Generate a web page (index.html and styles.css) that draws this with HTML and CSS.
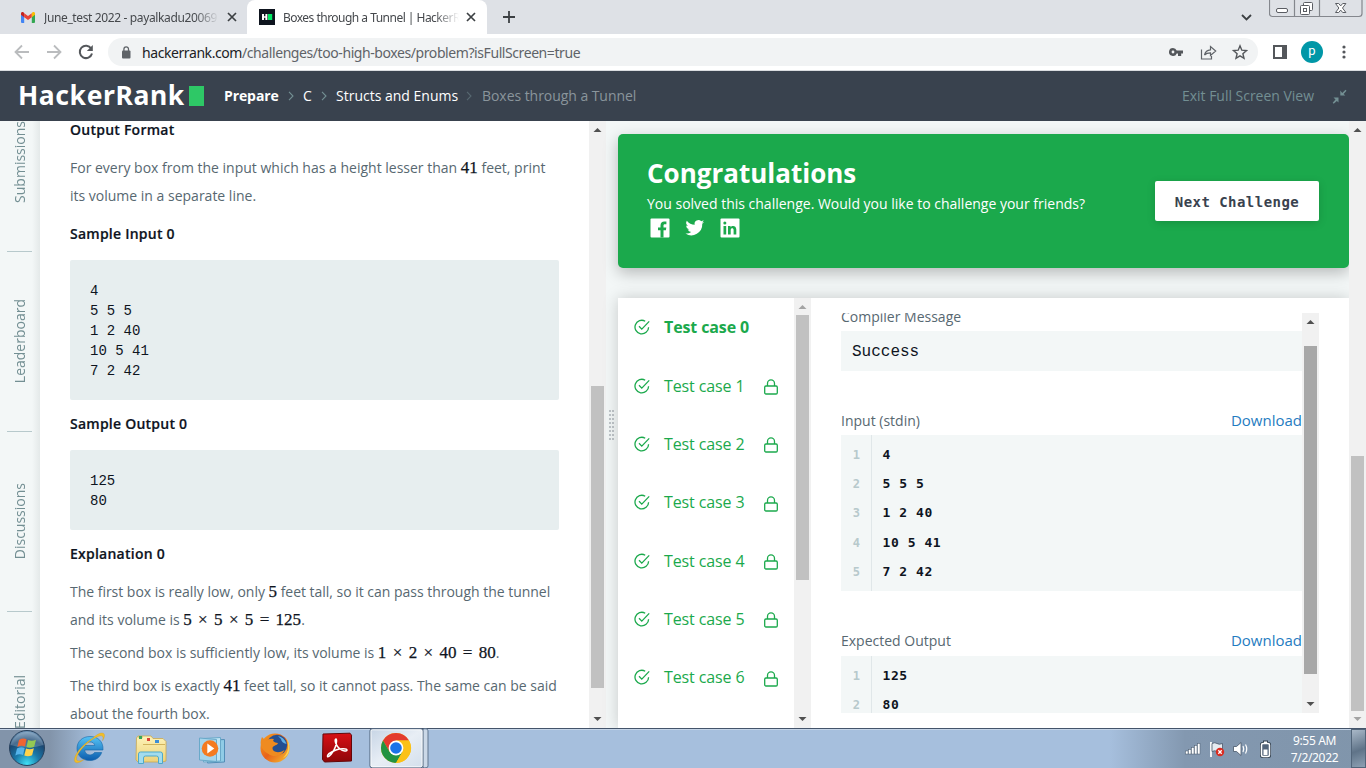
FILE: index.html
```html
<!DOCTYPE html>
<html lang="en">
<head>
<meta charset="utf-8">
<title>Boxes through a Tunnel | HackerRank</title>
<link rel="stylesheet" href="styles.css">
</head>
<body>
<svg width="0" height="0" class="defs">
  <symbol id="close" viewBox="0 0 10 10"><path d="M1 1l8 8M9 1L1 9" stroke="#3c4043" stroke-width="1.7" fill="none"/></symbol>
  <symbol id="check" viewBox="0 0 16 16"><path d="M11.2 2.2A6.8 6.8 0 1 0 14.6 8.2M5 7.2l2.8 2.9L15.2 2.4" stroke="#1ba94c" stroke-width="1.3" fill="none"/></symbol>
  <symbol id="lock" viewBox="0 0 14 16"><rect x=".7" y="7" width="12.6" height="8" rx="1.2" fill="none" stroke="#1ba94c" stroke-width="1.3"/><path d="M3.5 7V4.4a3.5 3.5 0 0 1 7 0V7" fill="none" stroke="#1ba94c" stroke-width="1.3"/></symbol>
  <symbol id="chev" viewBox="0 0 6 10"><path d="M1 .8l4 4.2-4 4.2" fill="none" stroke="currentColor" stroke-width="1.1"/></symbol>
</svg>

<div class="tabs">
  <div class="tab">
    <svg width="14" height="11" viewBox="0 0 14 11"><path d="M0 1.5V10a1 1 0 0 0 1 1h2.2V4.5z" fill="#4285f4"/><path d="M14 1.5V10a1 1 0 0 1-1 1h-2.2V4.5z" fill="#34a853"/><path d="M3.2 1.2L7 4.1l3.8-2.9v4L7 8.1 3.2 5.2z" fill="#ea4335"/><path d="M0 1.6C0 0 1.7-.3 2.6.5l.6.6v4.1L0 2.8z" fill="#c5221f"/><path d="M14 1.6C14 0 12.300-.3 11.400.5l-.6.6v4.100L14 2.800z" fill="#fbbc04"/></svg>
    <span class="tab-title mail">June_test 2022 - payalkadu20069</span>
    <svg width="10" height="10"><use href="#close"/></svg>
  </div>
  <div class="tab active">
    <svg width="16" height="16"><rect width="16" height="16" fill="#0e141e"/><path d="M3 5h2v2.200h1.400V5h2v6h-2V8.800H5V11H3z" fill="#fff"/><rect x="9" y="5" width="4.200" height="6" fill="#00ea64"/></svg>
    <span class="tab-title hr">Boxes through a Tunnel | HackerR</span>
    <svg width="10" height="10"><use href="#close"/></svg>
  </div>
  <svg class="plus" width="12" height="12"><path d="M6 0v12M0 6h12" stroke="#3c4043" stroke-width="1.800"/></svg>
  <svg class="drop" width="11" height="7"><path d="M1 1l4.500 4.500L10 1" fill="none" stroke="#3c4043" stroke-width="1.800"/></svg>
  <svg class="winbtns" width="94" height="18"><path d="M.5 0v13.500a3 3 0 0 0 3 3h86.500a3 3 0 0 0 3-3V0M25.500 0v16M50.500 0v16" fill="none" stroke="#84878d" stroke-width="1.200"/><g fill="#fff" stroke="#5a5d63"><rect x="7.500" y="8.500" width="11" height="4" rx="1.500"/><rect x="34.500" y="2.500" width="9" height="8" rx="1"/><rect x="31.500" y="5.500" width="9" height="9" rx="1"/><rect x="34.500" y="8.500" width="3" height="3"/><path d="M66.500 3.500h3.200l2 2.400 2-2.400h3.200l-3.400 4.500 3.400 4.500h-3.200l-2-2.400-2 2.400h-3.200L69.900 8z"/></g></svg>
</div>

<div class="toolbar">
  <svg width="108" height="36" viewBox="0 0 108 36" fill="none"><g stroke="#babcbe" stroke-width="1.800"><path d="M29 18H16M22 11.500L15.500 18l6.500 6.500M47 18h13M54 11.500l6.500 6.500-6.500 6.500"/></g><path d="M91.200 14.500A6.200 6.200 0 1 0 92 19.500" stroke="#54575b" stroke-width="2"/><path d="M92.800 11v6h-6z" fill="#54575b"/></svg>
  <div class="omnibox">
    <svg width="10" height="13" viewBox="0 0 10 13"><rect x="1" y="4.500" width="8.500" height="8" rx="1" fill="#5f6368"/><path d="M2.900 5V3.200a2.300 2.300 0 0 1 4.600 0V5" fill="none" stroke="#5f6368" stroke-width="1.300"/></svg>
    <span class="url"><b>hackerrank.com</b>/challenges/too-high-boxes/problem?isFullScreen=true</span>
    <svg width="80" height="18" viewBox="0 0 80 18"><path d="M5 5a4 4 0 1 0 3.700 5.500H10V13h3.200v-2.500H15V7.500H8.700A4 4 0 0 0 5 5zm0 2.600a1.400 1.400 0 1 1 0 2.800 1.400 1.400 0 0 1 0-2.800z" fill="#54575b"/><path d="M33.500 6.500v9.500h10v-3M36.500 12c.8-3.500 3-5 6-5.200V3.500L47.700 8l-5.200 4.500V9.800c-2.500 0-4.500.5-6 2.200z" fill="none" stroke="#5f6368" stroke-width="1.200"/><path d="M72 2.800l1.800 4.400 4.700.4-3.600 3.100 1.100 4.600-4-2.500-4 2.500 1.100-4.600-3.600-3.100 4.700-.4z" fill="none" stroke="#54575b" stroke-width="1.400"/></svg>
  </div>
  <svg width="14" height="14"><path d="M1 1h12v12H1z" fill="none" stroke="#54575b" stroke-width="2"/><path d="M9 0h5v14H9z" fill="#54575b"/></svg>
  <span class="avatar">p</span>
  <svg width="4" height="14" fill="#54575b"><circle cx="2" cy="2" r="1.600"/><circle cx="2" cy="7" r="1.600"/><circle cx="2" cy="12" r="1.600"/></svg>
</div>

<header class="header">
  <span class="logo">HackerRank</span><span class="logo-block"></span>
  <b class="c-prepare">Prepare</b><svg class="chev" width="6" height="10"><use href="#chev"/></svg>
  <span class="c-c">C</span><svg class="chev" width="6" height="10"><use href="#chev"/></svg>
  <span class="c-structs">Structs and Enums</span><svg class="chev dim" width="6" height="10"><use href="#chev"/></svg>
  <span class="c-last">Boxes through a Tunnel</span>
  <span class="exit">Exit Full Screen View</span>
  <svg width="15" height="15" viewBox="0 0 15 15" fill="#738f93"><path d="M8.300 1.500v5h5L11.600 5 14.500 1.800l-1-1L10.200 4zM1.500 8.500h5v5L4.900 12l-3.200 2.700-1-1L3.500 10.500z"/></svg>
</header>

<main class="main">
  <nav class="side">
    <div><span>Submissions</span></div><div><span>Leaderboard</span></div><div><span>Discussions</span></div><div><span>Editorial</span></div>
  </nav>
  <section class="problem">
    <h4>Output Format</h4>
    <p><span class="l1">For every box from the input which has a height lesser than <i>41</i> feet, print</span><br><span>its volume in a separate line.</span></p>
    <h4>Sample Input 0</h4>
    <pre>4
5 5 5
1 2 40
10 5 41
7 2 42</pre>
    <h4>Sample Output 0</h4>
    <pre>125
80</pre>
    <h4>Explanation 0</h4>
    <p><span class="narrow">The first box is really low, only <i>5</i> feet tall, so it can pass through the tunnel</span><br><span>and its volume is <i>5 × 5 × 5 = 125</i>.</span></p>
    <p class="tight"><span class="narrow">The second box is sufficiently low, its volume is <i>1 × 2 × 40 = 80</i>.</span></p>
    <p class="tight">The third box is exactly <i>41</i> feet tall, so it cannot pass. The same can be said<br>about the fourth box.</p>
  </section>
  <div class="sb sb-problem"><b class="up"></b><div class="thumb"></div><b class="down"></b></div>
  <div class="splitter"><div class="grip"></div></div>
  <section class="result">
    <div class="banner">
      <div class="msg">
        <h2>Congratulations</h2>
        <p>You solved this challenge. Would you like to challenge your friends?</p>
        <svg width="92" height="20" viewBox="0 0 92 20"><rect x=".5" y=".5" width="19" height="19" rx="1" fill="#fff"/><path d="M10.500 19.500v-7.300H8V9.500h2.500V7.400c0-2.500 1.500-3.800 3.700-3.800h2.200v2.600h-1.500c-1.200 0-1.400.6-1.400 1.400v1.900h2.800l-.4 2.700h-2.400v7.300z" fill="#1ba94c"/><path transform="translate(35.500 1.500) scale(.78)" d="M23.900 3a9.500 9.500 0 0 1-2.800.8A4.900 4.900 0 0 0 23.300 1.100a10 10 0 0 1-3.100 1.200 4.900 4.900 0 0 0-8.400 4.500A14 14 0 0 1 1.700 1.600a4.900 4.900 0 0 0 1.500 6.600 4.900 4.900 0 0 1-2.200-.6 4.900 4.900 0 0 0 3.900 4.900 4.900 4.900 0 0 1-2.200.1 4.900 4.900 0 0 0 4.600 3.400A9.900 9.900 0 0 1 0 18a14 14 0 0 0 21.500-12.400A10 10 0 0 0 23.900 3z" fill="#fff"/><rect x="70.500" y=".5" width="19" height="19" rx="1" fill="#fff"/><path d="M73.500 8h2.700v8.500h-2.700zM78 8h2.600v1.200c.9-1.700 5.700-2.200 5.700 2.300v5h-2.700v-4.400c0-2.400-2.900-2.200-2.900 0v4.400H78z" fill="#1ba94c"/><circle cx="74.850" cy="5" r="1.550" fill="#1ba94c"/></svg>
      </div>
      <button>Next Challenge</button>
    </div>
    <div class="cases">
      <ul>
        <li class="on"><svg width="16" height="16"><use href="#check"/></svg><span>Test case 0</span></li>
        <li><svg width="16" height="16"><use href="#check"/></svg><span>Test case 1</span><svg class="lk" width="14" height="16"><use href="#lock"/></svg></li>
        <li><svg width="16" height="16"><use href="#check"/></svg><span>Test case 2</span><svg class="lk" width="14" height="16"><use href="#lock"/></svg></li>
        <li><svg width="16" height="16"><use href="#check"/></svg><span>Test case 3</span><svg class="lk" width="14" height="16"><use href="#lock"/></svg></li>
        <li><svg width="16" height="16"><use href="#check"/></svg><span>Test case 4</span><svg class="lk" width="14" height="16"><use href="#lock"/></svg></li>
        <li><svg width="16" height="16"><use href="#check"/></svg><span>Test case 5</span><svg class="lk" width="14" height="16"><use href="#lock"/></svg></li>
        <li><svg width="16" height="16"><use href="#check"/></svg><span>Test case 6</span><svg class="lk" width="14" height="16"><use href="#lock"/></svg></li>
      </ul>
      <div class="sb sb-cases"><b class="up off"></b><div class="thumb"></div><b class="down"></b></div>
      <div class="output">
        <div class="out-body">
          <div class="lab first"><span>Compiler Message</span></div>
          <div class="success">Success</div>
          <div class="lab"><span>Input (stdin)</span><a>Download</a></div>
          <ol><li>4</li><li>5 5 5</li><li>1 2 40</li><li>10 5 41</li><li>7 2 42</li></ol>
          <div class="lab last"><span>Expected Output</span><a>Download</a></div>
          <ol><li>125</li><li>80</li></ol>
        </div>
        <div class="sb sb-out"><b class="up"></b><div class="thumb"></div><b class="down"></b></div>
      </div>
    </div>
  </section>
  <div class="sb sb-page"><b class="up"></b><div class="thumb"></div><b class="down off"></b></div>
</main>

<footer class="taskbar">
  <svg width="430" height="40" viewBox="0 0 430 40">
    <defs>
      <radialGradient id="orb" cx=".5" cy=".95" r=".9"><stop offset="0" stop-color="#3fe0f5"/><stop offset=".4" stop-color="#1a78a8"/><stop offset=".75" stop-color="#1c4872"/><stop offset="1" stop-color="#6d93b5"/></radialGradient>
      <linearGradient id="ie" x2="0" y2="1"><stop offset="0" stop-color="#55c3f5"/><stop offset="1" stop-color="#0b5cad"/></linearGradient>
      <linearGradient id="fold" x2="0" y2="1"><stop offset="0" stop-color="#fdf3b8"/><stop offset="1" stop-color="#edd27a"/></linearGradient>
      <linearGradient id="fox" x2="1" y2="1"><stop offset="0" stop-color="#f9a51b"/><stop offset=".5" stop-color="#e8621a"/><stop offset="1" stop-color="#f7c331"/></linearGradient>
      <linearGradient id="red" x2="0" y2="1"><stop offset="0" stop-color="#d80f16"/><stop offset="1" stop-color="#8e0508"/></linearGradient>
      <linearGradient id="btn" x2="1" y2="1"><stop offset="0" stop-color="#c6d4e5"/><stop offset=".5" stop-color="#e8eef5"/><stop offset="1" stop-color="#d3dfec"/></linearGradient>
    </defs>
    <circle cx="27" cy="20" r="17.500" fill="url(#orb)" stroke="#28415d"/>
    <path d="M10.500 17a17 17 0 0 1 33 0Q27 22 10.500 17z" fill="#fff" opacity=".2"/>
    <path d="M19 12q4-2.500 7.500-.7L25 18.500q-4-1.700-7.700.6z" fill="#ef6532"/><path d="M28 12q4 1.800 8-.3l-1.800 7q-4 2-7.700.3z" fill="#93c954"/><path d="M17 20.500q3.800-2.200 7.700-.6l-1.700 7q-4-1.700-7.700.6z" fill="#55b3ea"/><path d="M26 20.500q4 1.700 7.900-.3l-1.800 7q-4 2-7.800.3z" fill="#fdd34b"/>
    <path d="M90 8.500c-8 0-13 5.300-13 12 0 7 5.200 12 12.700 12 5.700 0 10-2.600 12-8h-7.200c-2.500 4-9.500 3-9.800-2.500H103C103.500 13.500 98 8.500 90 8.500zM85 17.500c.7-4.500 9-5 9.700 0z" fill="url(#ie)" stroke="#1566a8" stroke-width=".6"/>
    <path d="M93 10C99 4 105 3.500 104.500 8c-.2 1.500-1 3-2 4.800 2-6-2-6-7-3C87 14 78 24 76.500 29.500c-1 4.500 4 4 8 1.700C78.500 36 73.500 36 74.500 30.500 75.800 24 85 14.500 93 10z" fill="#f2bd28" stroke="#c99520" stroke-width=".3"/>
    <path d="M136.500 10l1.500-2h13l2 2.500h10l3 3V33l-4 1h-24l-2-2z" fill="url(#fold)" stroke="#c9a850" stroke-width=".8"/><path d="M138 9h5M143 16.500h22" stroke="#d1b35c"/><path d="M139 8h3v3h-3z" fill="#35a65b"/><path d="M147 10h3v3h-3z" fill="#dd4237"/><path d="M155 12h4v3h-4z" fill="#3d8ed6"/>
    <path d="M138.500 35.500V26q0-2 2-2h20q2 0 2 2v9.500h-4V30q0-2-2-2h-11q-2 0-2 2v5.500z" fill="#a3dcee" stroke="#4ea9cb"/>
    <path d="M207.500 12.500l17-1V34l-17 1z" fill="#90cce6" stroke="#538eb7"/><path d="M203.500 10.500l17-1V33l-17 1z" fill="#bde4f4" stroke="#69a9c9"/><path d="M199.500 10l17 1.500v22l-17-1.500z" fill="#a6d5eb" stroke="#69a9c9"/><circle cx="210" cy="20.500" r="8.300" fill="#f47b20"/><path d="M207.300 15.500v10l7-5z" fill="#fff"/>
    <circle cx="275" cy="20" r="14.500" fill="url(#fox)"/><circle cx="277" cy="17" r="10.200" fill="#244f91"/><path d="M278 8q6 1 8.500 8-5-1-5.500-5z" fill="#61afe5"/><path d="M262 9l4 4q3-3 8-2c-2 2 0 3.500 4 4-1 3-5 2-5.500 5 0 4 6 6 12 2-2 6-11 8-16 4C259 21 260 13 262 9z" fill="#ef8b20"/><path d="M286 10c4 8 2 15-3 20 7-2 9-13 3-20z" fill="#fbd151"/>
    <path d="M323 6l27-.8 1.500 2V33l-27 1-2-2.500z" fill="url(#red)" stroke="#650609"/><path d="M336 11c-2 1 0 7 4 10 3 2.500 7 2.500 7 1s-6-2-11 0-9 5-8.500 6.500c1 1.500 6-4 8-10 1.300-4 1.200-7.500.5-7.500z" fill="none" stroke="#fff" stroke-width="1.500"/>
    <rect x="422.500" y=".8" width="5.500" height="39" rx="2" fill="#cbd8e7" stroke="#60768f"/><rect x="370" y=".8" width="53" height="39" rx="2" fill="url(#btn)" stroke="#4c6079"/><rect x="371" y="1.800" width="51" height="37" rx="1.500" fill="none" stroke="#fff" opacity=".8"/>
    <circle cx="396" cy="20" r="15" fill="#fbc116"/><path d="M383 12.500A15 15 0 0 1 409 12.500H396L389.500 23.700z" fill="#e33b2e"/><path d="M383 12.500l6.500 11.200A7.500 7.500 0 0 0 396 27.500h2.500L395.500 35A15 15 0 0 1 383 12.500z" fill="#229342"/><path d="M396 35l6.500-11.300-8.500 3L388 23z" fill="#229342"/><path d="M402.500 23.700L396 35A15 15 0 0 0 409 12.500H396z" fill="#fbc116"/><circle cx="396" cy="20" r="7.400" fill="#fff"/><circle cx="396" cy="20" r="5.800" fill="#1a73e8"/>
  </svg>
  <div class="tray">
    <svg width="88" height="20" viewBox="0 0 88 20"><g fill="#fff" stroke="#4a5a6c" stroke-width=".5"><rect x=".5" y="12" width="2.500" height="3"/><rect x="3.500" y="10.500" width="2.500" height="4.500"/><rect x="6.500" y="8.500" width="2.500" height="6.500"/><rect x="9.500" y="6.500" width="2.500" height="8.500"/><rect x="12.500" y="4.500" width="2.500" height="10.500"/></g><path d="M26 3v15" stroke="#fff" stroke-width="1.800"/><path d="M27 4.500q3-1.500 5 0t5.500 0v8q-3.500 1.500-5.500 0t-5 0z" fill="#e5ebf1" stroke="#465568" stroke-width=".8"/><circle cx="35" cy="13" r="4.200" fill="#d92b20"/><path d="M33.300 11.300l3.400 3.400M36.700 11.300l-3.400 3.400" stroke="#fff" stroke-width="1.300"/><path d="M48.500 7.500h3L56 3.500v13l-4.500-4h-3z" fill="#fff" stroke="#465568" stroke-width=".8"/><path d="M58 7q1.500 3 0 6M60.500 5.500q2.500 4.500 0 9" fill="none" stroke="#fff" stroke-width="1.200"/><rect x="75" y="3" width="11" height="16" rx="2.500" fill="#33414f"/><path d="M78 1.500h5V4h-5z" fill="#33414f"/><rect x="76.500" y="4.500" width="8" height="13" rx="1.500" fill="#53657a" stroke="#fff" stroke-width="1.500"/><path d="M79 2.500h3V4h-3zM78.500 10.500h4v5.500h-4z" fill="#fff"/></svg>
    <div class="clock">9:55 AM<br>7/2/2022</div>
    <div class="peek"></div>
  </div>
</footer>
</body>
</html>
```

FILE: styles.css
```css
* { box-sizing: border-box; }
body { margin: 0; width: 1366px; height: 768px; overflow: hidden; display: flex; flex-direction: column; font: 14px "Open Sans", "Noto Sans", sans-serif; background: #fff; }
svg { display: block; flex: none; }
.defs { position: absolute; }
span, a, b { white-space: nowrap; }

.tabs { height: 34px; flex: none; background: #dee1e6; display: flex; align-items: center; }
.tab { width: 247px; height: 34px; padding-left: 21px; display: flex; align-items: center; }
.tab.active { width: 240px; background: #fff; border-radius: 8px 8px 0 0; padding-left: 12px; }
.tab-title { font: 12px "Noto Sans", sans-serif; color: #45484c; overflow: hidden; margin-left: 9px; width: 175px; margin-right: 8px; -webkit-mask-image: linear-gradient(90deg, #000 86%, transparent); mask-image: linear-gradient(90deg, #000 86%, transparent); }
.tab-title.hr { width: 176px; margin-left: 8px; margin-right: 7px; }
.mail { letter-spacing: -.37px; }
.hr { letter-spacing: -.52px; }
.plus { margin-left: 16px; }
.drop { margin-left: auto; margin-right: 17px; }
.winbtns { align-self: flex-start; margin-right: 3px; }

.toolbar { height: 37px; flex: none; border-bottom: 1px solid #d9dce0; display: flex; align-items: center; }
.omnibox { width: 1150px; height: 28px; border-radius: 14px; background: #f1f3f4; display: flex; align-items: center; padding-left: 13px; margin-right: 15px; }
.url { margin-left: 11px; color: #5f6368; font: 14px "Noto Sans", sans-serif; letter-spacing: -.42px; margin-right: auto; }
.url b { font-weight: 400; color: #202124; }
.omnibox svg:last-child { margin-right: 10px; }
.avatar { width: 22px; height: 22px; border-radius: 50%; background: #0097a7; color: #fff; text-align: center; font: 13px/20px Roboto, sans-serif; margin: 0 31px 0 14px; }
.toolbar > svg:last-child { margin-left: -12px; }

.header { height: 50px; flex: none; background: #39424e; display: flex; align-items: center; color: #fff; padding-left: 18px; }
.header > span, .header > b { margin-top: -2px; }
.header > .logo { font: 700 26.5px/50px "Noto Sans", sans-serif; width: 171px; letter-spacing: .6px; }
.header > .logo-block { width: 15px; height: 20px; background: #2ec866; margin: 0 20px 0 0; }
.c-prepare { font-weight: 700; width: 55px; letter-spacing: -.1px; }
.chev { color: #738f93; margin: 0 9px 0 9px; }
.chev.dim { color: #576871; margin-right: 10px; }
.c-c { width: 9px; }
.c-structs { width: 121px; }
.c-last { color: #8a959c; letter-spacing: -.05px; }
.exit { color: #738f93; margin-left: auto; margin-right: 18px; letter-spacing: -.02px; }
.header > svg:last-child { margin-right: 19px; }

.main { height: 607px; flex: none; display: flex; background: #f3f7f7; overflow: hidden; }
.side { width: 40px; flex: none; overflow: hidden; color: #738f93; background: linear-gradient(90deg, #f3f7f7 80%, #e4e9e9); }
.side div { height: 180px; width: 25px; margin-left: 7px; border-bottom: 1px solid #b7c9cc; display: flex; align-items: center; justify-content: center; }
.side div:first-child { margin-top: -49px; }
.side span { writing-mode: vertical-rl; transform: rotate(180deg); line-height: 20px; }
.problem { width: 549px; flex: none; background: #fff; padding: 0 30px; overflow: hidden; color: #576871; white-space: nowrap; }
.problem h4 { margin: 10px 0 0; font: 600 14px/28px "Open Sans", sans-serif; letter-spacing: .24px; color: #0e141e; -webkit-text-stroke: .2px #0e141e; }
.problem h4:first-child { margin-top: -5px; }
.problem p { margin: 10px 0 0; line-height: 28px; }
.problem p.tight { margin-top: 5px; }
.problem .narrow { letter-spacing: -.02px; }
.problem pre { margin: 12px 0 0; padding: 21px 20px 19px; background: #e7eeef; border-radius: 2px; font: 14px/20px "Liberation Mono", monospace; color: #0e141e; }
.problem i { font: 17px/20px "Liberation Serif", serif; color: #0e141e; -webkit-text-stroke: .25px #0e141e; word-spacing: 2.1px; letter-spacing: 0; }

.sb { width: 17px; flex: none; background: #f1f1f1; display: flex; flex-direction: column; align-items: center; }
.sb b { border: 4px solid transparent; width: 0; height: 0; transform: translateX(-.5px); }
.sb .up { border-top: 0; border-bottom-color: #505050; margin-top: 7px; }
.sb .down { border-bottom: 0; border-top-color: #505050; margin-top: auto; margin-bottom: 7px; }
.sb .up.off { border-bottom-color: #a3a3a3; }
.sb .down.off { border-top-color: #a3a3a3; }
.thumb { width: 13px; background: #c1c1c1; }
.sb-problem .thumb { margin-top: 254px; height: 302px; }
.sb-page .thumb { margin-top: 324px; height: 255px; }
.sb-cases .thumb { margin-top: 6px; height: 265px; }
.sb-out .thumb { margin-top: 22px; height: 328px; background: #a8a8a8; }
.splitter { width: 12px; flex: none; background: #f3f7f7; display: flex; align-items: center; padding-left: 3px; }
.grip { width: 5px; height: 30px; background: repeating-linear-gradient(180deg, transparent 0 2px, #f3f7f7 2px 4px), linear-gradient(90deg, #bfc5c9 2px, transparent 2px 3px, #bfc5c9 3px); }

.result { width: 731px; flex: none; padding-top: 13px; }
.banner { height: 134px; border-radius: 5px; background: #1ba94c; color: #fff; box-shadow: 0 5px 15px rgba(0, 0, 0, .25); display: flex; align-items: center; justify-content: space-between; padding: 0 30px 0 29px; }
.msg { height: 86px; }
.banner h2 { margin: 0; font: 700 26px/30px "Open Sans", sans-serif; }
.banner p { margin: 6px 0 4px; line-height: 20px; white-space: nowrap; }
.msg svg { margin-left: 3px; }
.banner button { width: 164px; height: 40px; border: 0; border-radius: 2px; background: #fff; color: #39424e; font: 700 14px "DejaVu Sans Mono", monospace; letter-spacing: .45px; padding: 1px 0 0; box-shadow: 0 2px 8px rgba(0, 0, 0, .15); }
.cases { margin-top: 30px; height: 430px; background: #fff; display: flex; box-shadow: 0 0 15px rgba(0, 0, 0, .18); }
.cases ul { margin: 0; padding: 0; width: 176px; list-style: none; color: #1ba94c; font-size: 16px; }
.cases ul li { height: 58.350px; display: flex; align-items: center; padding-left: 15.500px; }
.cases ul li span { margin-left: 14.500px; width: 85px; letter-spacing: -.12px; }
.cases ul li .lk { margin: 3px 0 0 15px; }
.on { font-weight: 700; }
.output { display: flex; padding: 15px 30px 15px; }
.out-body { width: 461px; height: 400px; overflow: hidden; }
.lab { display: flex; justify-content: space-between; align-items: flex-end; height: 64px; line-height: 28px; color: #576871; }
.lab.first { height: 18px; }
.lab.last { height: 65px; padding-bottom: 1px; }
.lab a { color: #1f7cc1; font-size: 15px; padding-bottom: 1px; }
.success { height: 40px; background: #f3f7f7; font: 16px/42px "Liberation Mono", monospace; color: #0e141e; padding-left: 11px; }
.output ol { margin: 0; padding: 5px 0; background: #f3f7f7 linear-gradient(#e0e7e9, #e0e7e9) 30px 0 / 1px 100% no-repeat; list-style: none; counter-reset: n; font: 700 13px/29.200px "DejaVu Sans Mono", monospace; letter-spacing: .55px; color: #0e141e; }
.output ol li { counter-increment: n; white-space: pre; height: 29.200px; }
.output ol li::before { content: counter(n); display: inline-block; width: 19.500px; margin-right: 22px; text-align: right; color: #b7c9cc; font-weight: 700; font-size: 12px; }

.taskbar { height: 40px; flex: none; display: flex; justify-content: space-between; border-top: 0; box-shadow: inset 0 1px #44546a, inset 0 2px #c5d5e8; background: linear-gradient(90deg, #8294aa 0, #8294aa 50px, #a6bfdd 95px, #a6bfdd 1110px, #8398b0 1185px, #8095ab 100%); }
.tray { display: flex; align-items: center; }
.tray svg { margin-top: 2px; }
.clock { width: 73px; text-align: center; color: #fff; font: 12px/17px "Noto Sans", sans-serif; letter-spacing: -.35px; margin-left: 5px; padding-top: 2px; }
.peek { width: 15px; height: 39px; align-self: flex-end; border: 1px solid #52657a; background: linear-gradient(160deg, #a9b8c8, #5f7388 55%, #8da0b3); }
```
